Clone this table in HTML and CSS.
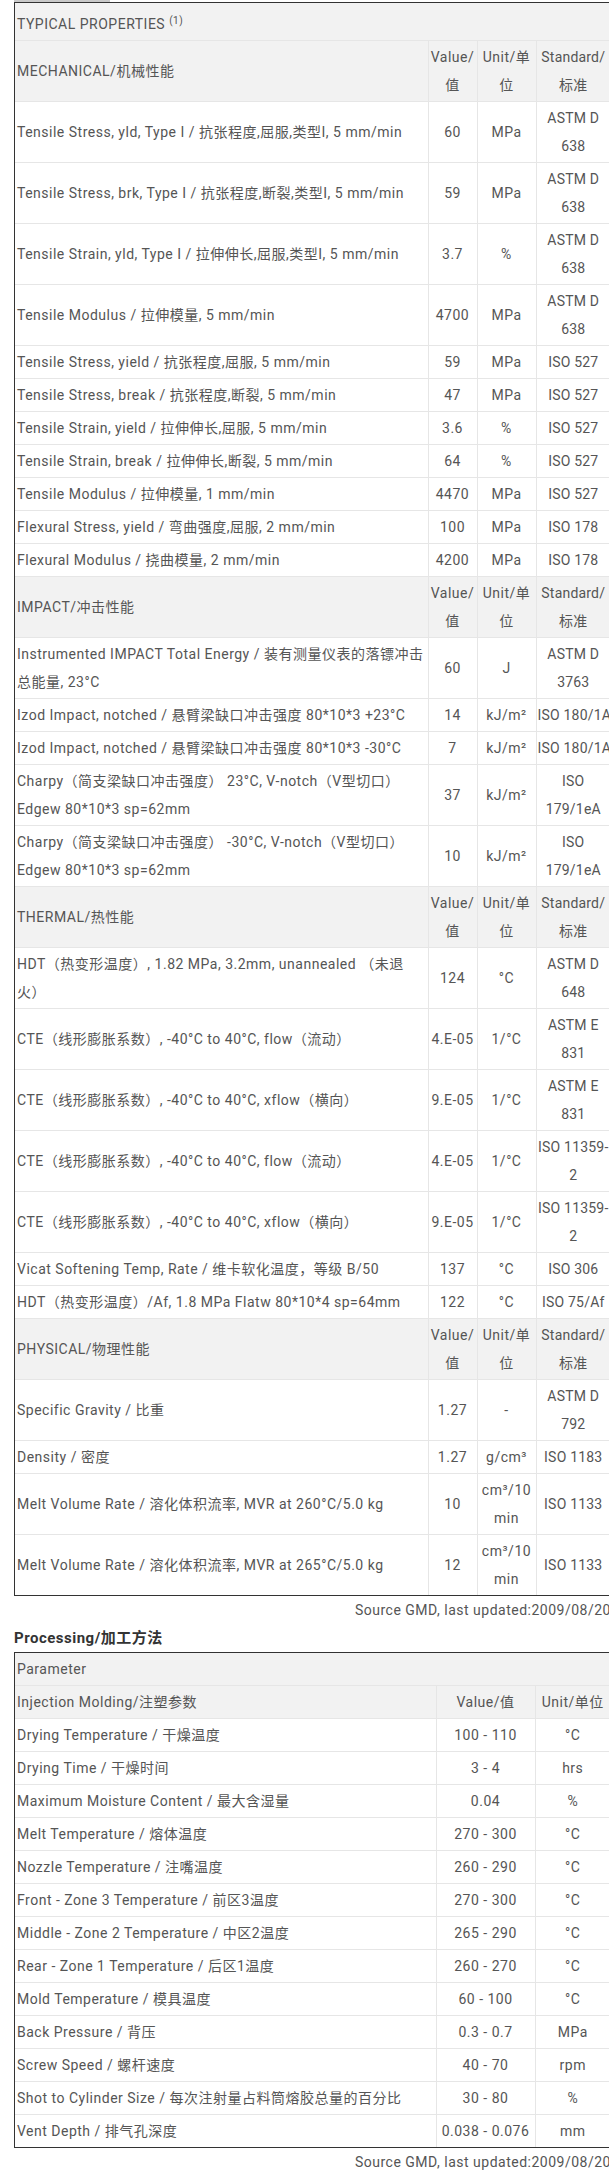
FILE: index.html
```html
<!DOCTYPE html>
<html lang="zh-CN">
<head>
<meta charset="utf-8">
<title>Typical Properties</title>
<link rel="stylesheet" href="styles.css">
</head>
<body>
<div class="page">
  <div class="tab-edge"></div>
  <div class="frame">
    <table class="grid props">
      <colgroup><col class="p-name"><col class="p-val"><col class="p-unit"><col class="p-std"></colgroup>
      <tr class="title"><td colspan="4">TYPICAL PROPERTIES <sup>(1)</sup></td></tr>
      <tr class="sec"><td>MECHANICAL/机械性能</td><td class="c">Value/值</td><td class="c">Unit/单位</td><td class="c std">Standard/标准</td></tr>
      <tr><td>Tensile Stress, yld, Type I / 抗张程度,屈服,类型I, 5 mm/min</td><td class="c">60</td><td class="c">MPa</td><td class="c std">ASTM D 638</td></tr>
      <tr><td>Tensile Stress, brk, Type I / 抗张程度,断裂,类型I, 5 mm/min</td><td class="c">59</td><td class="c">MPa</td><td class="c std">ASTM D 638</td></tr>
      <tr><td>Tensile Strain, yld, Type I / 拉伸伸长,屈服,类型I, 5 mm/min</td><td class="c">3.7</td><td class="c">%</td><td class="c std">ASTM D 638</td></tr>
      <tr><td>Tensile Modulus / 拉伸模量, 5 mm/min</td><td class="c">4700</td><td class="c">MPa</td><td class="c std">ASTM D 638</td></tr>
      <tr><td>Tensile Stress, yield / 抗张程度,屈服, 5 mm/min</td><td class="c">59</td><td class="c">MPa</td><td class="c std">ISO 527</td></tr>
      <tr><td>Tensile Stress, break / 抗张程度,断裂, 5 mm/min</td><td class="c">47</td><td class="c">MPa</td><td class="c std">ISO 527</td></tr>
      <tr><td>Tensile Strain, yield / 拉伸伸长,屈服, 5 mm/min</td><td class="c">3.6</td><td class="c">%</td><td class="c std">ISO 527</td></tr>
      <tr><td>Tensile Strain, break / 拉伸伸长,断裂, 5 mm/min</td><td class="c">64</td><td class="c">%</td><td class="c std">ISO 527</td></tr>
      <tr><td>Tensile Modulus / 拉伸模量, 1 mm/min</td><td class="c">4470</td><td class="c">MPa</td><td class="c std">ISO 527</td></tr>
      <tr><td>Flexural Stress, yield / 弯曲强度,屈服, 2 mm/min</td><td class="c">100</td><td class="c">MPa</td><td class="c std">ISO 178</td></tr>
      <tr><td>Flexural Modulus / 挠曲模量, 2 mm/min</td><td class="c">4200</td><td class="c">MPa</td><td class="c std">ISO 178</td></tr>
      <tr class="sec"><td>IMPACT/冲击性能</td><td class="c">Value/值</td><td class="c">Unit/单位</td><td class="c std">Standard/标准</td></tr>
      <tr><td>Instrumented IMPACT Total Energy / 装有测量仪表的落镖冲击总能量, 23°C</td><td class="c">60</td><td class="c">J</td><td class="c std">ASTM D 3763</td></tr>
      <tr><td>Izod Impact, notched / 悬臂梁缺口冲击强度 80*10*3 +23°C</td><td class="c">14</td><td class="c">kJ/m²</td><td class="c std nw">ISO 180/1A</td></tr>
      <tr><td>Izod Impact, notched / 悬臂梁缺口冲击强度 80*10*3 -30°C</td><td class="c">7</td><td class="c">kJ/m²</td><td class="c std nw">ISO 180/1A</td></tr>
      <tr><td>Charpy（简支梁缺口冲击强度） 23°C, V-notch（V型切口） Edgew 80*10*3 sp=62mm</td><td class="c">37</td><td class="c">kJ/m²</td><td class="c std">ISO 179/1eA</td></tr>
      <tr><td>Charpy（简支梁缺口冲击强度） -30°C, V-notch（V型切口） Edgew 80*10*3 sp=62mm</td><td class="c">10</td><td class="c">kJ/m²</td><td class="c std">ISO 179/1eA</td></tr>
      <tr class="sec"><td>THERMAL/热性能</td><td class="c">Value/值</td><td class="c">Unit/单位</td><td class="c std">Standard/标准</td></tr>
      <tr><td>HDT（热变形温度）, 1.82 MPa, 3.2mm, unannealed （未退火）</td><td class="c">124</td><td class="c">°C</td><td class="c std">ASTM D 648</td></tr>
      <tr><td>CTE（线形膨胀系数）, -40°C to 40°C, flow（流动）</td><td class="c">4.E-05</td><td class="c">1/°C</td><td class="c std">ASTM E 831</td></tr>
      <tr><td>CTE（线形膨胀系数）, -40°C to 40°C, xflow（横向）</td><td class="c">9.E-05</td><td class="c">1/°C</td><td class="c std">ASTM E 831</td></tr>
      <tr><td>CTE（线形膨胀系数）, -40°C to 40°C, flow（流动）</td><td class="c">4.E-05</td><td class="c">1/°C</td><td class="c std">ISO 11359-2</td></tr>
      <tr><td>CTE（线形膨胀系数）, -40°C to 40°C, xflow（横向）</td><td class="c">9.E-05</td><td class="c">1/°C</td><td class="c std">ISO 11359-2</td></tr>
      <tr><td>Vicat Softening Temp, Rate / 维卡软化温度，等级 B/50</td><td class="c">137</td><td class="c">°C</td><td class="c std">ISO 306</td></tr>
      <tr><td>HDT（热变形温度）/Af, 1.8 MPa Flatw 80*10*4 sp=64mm</td><td class="c">122</td><td class="c">°C</td><td class="c std">ISO 75/Af</td></tr>
      <tr class="sec"><td>PHYSICAL/物理性能</td><td class="c">Value/值</td><td class="c">Unit/单位</td><td class="c std">Standard/标准</td></tr>
      <tr><td>Specific Gravity / 比重</td><td class="c">1.27</td><td class="c">-</td><td class="c std">ASTM D 792</td></tr>
      <tr><td>Density / 密度</td><td class="c">1.27</td><td class="c">g/cm³</td><td class="c std">ISO 1183</td></tr>
      <tr><td>Melt Volume Rate / 溶化体积流率, MVR at 260°C/5.0 kg</td><td class="c">10</td><td class="c">cm³/10 min</td><td class="c std">ISO 1133</td></tr>
      <tr><td>Melt Volume Rate / 溶化体积流率, MVR at 265°C/5.0 kg</td><td class="c">12</td><td class="c">cm³/10 min</td><td class="c std">ISO 1133</td></tr>
    </table>
  </div>
  <p class="source">Source GMD, last updated:2009/08/20</p>

  <h2 class="heading">Processing/加工方法</h2>
  <div class="frame">
    <table class="grid proc">
      <colgroup><col class="q-name"><col class="q-val"><col class="q-unit"></colgroup>
      <tr class="sec"><td colspan="3">Parameter</td></tr>
      <tr class="sec"><td>Injection Molding/注塑参数</td><td class="c">Value/值</td><td class="c">Unit/单位</td></tr>
      <tr><td>Drying Temperature / 干燥温度</td><td class="c">100 - 110</td><td class="c">°C</td></tr>
      <tr><td>Drying Time / 干燥时间</td><td class="c">3 - 4</td><td class="c">hrs</td></tr>
      <tr><td>Maximum Moisture Content / 最大含湿量</td><td class="c">0.04</td><td class="c">%</td></tr>
      <tr><td>Melt Temperature / 熔体温度</td><td class="c">270 - 300</td><td class="c">°C</td></tr>
      <tr><td>Nozzle Temperature / 注嘴温度</td><td class="c">260 - 290</td><td class="c">°C</td></tr>
      <tr><td>Front - Zone 3 Temperature / 前区3温度</td><td class="c">270 - 300</td><td class="c">°C</td></tr>
      <tr><td>Middle - Zone 2 Temperature / 中区2温度</td><td class="c">265 - 290</td><td class="c">°C</td></tr>
      <tr><td>Rear - Zone 1 Temperature / 后区1温度</td><td class="c">260 - 270</td><td class="c">°C</td></tr>
      <tr><td>Mold Temperature / 模具温度</td><td class="c">60 - 100</td><td class="c">°C</td></tr>
      <tr><td>Back Pressure / 背压</td><td class="c">0.3 - 0.7</td><td class="c">MPa</td></tr>
      <tr><td>Screw Speed / 螺杆速度</td><td class="c">40 - 70</td><td class="c">rpm</td></tr>
      <tr><td>Shot to Cylinder Size / 每次注射量占料筒熔胶总量的百分比</td><td class="c">30 - 80</td><td class="c">%</td></tr>
      <tr><td>Vent Depth / 排气孔深度</td><td class="c">0.038 - 0.076</td><td class="c">mm</td></tr>
    </table>
  </div>
  <p class="source">Source GMD, last updated:2009/08/20</p>
</div>
</body>
</html>
```

FILE: styles.css
```css
html, body {
  margin: 0;
  padding: 0;
  overflow-x: hidden;
  background: #fff;
}

body {
  font-family: Roboto, "Noto Sans CJK SC", sans-serif;
  font-size: 14px;
  letter-spacing: 0.5px;
  color: #555;
}

.page {
  width: 597px;
  padding-left: 14px;
}

.tab-edge {
  width: 96px;
  height: 2px;
  background: #c9c9c9;
}

.frame {
  border: 1px solid #333;
}

.grid {
  width: 100%;
  border-collapse: collapse;
  table-layout: fixed;
}

.grid td {
  border: 1px solid #e6e6e6;
  padding: 2px 2px;
  line-height: 28px;
  vertical-align: middle;
  text-align: left;
}

.grid tr:first-child td { border-top: 0; }
.grid tr:last-child td { border-bottom: 0; }
.grid td:first-child { border-left: 0; }
.grid td:last-child { border-right: 0; }

.grid td.c { text-align: center; }
.grid td.std { letter-spacing: 0.2px; padding-left: 1px; padding-right: 1px; }
.grid td.nw { white-space: nowrap; }

.sec td, .title td {
  background: #f2f2f2;
}

.title td {
  padding-top: 7px;
  padding-bottom: 2px;
}

.title sup {
  font-size: 10px;
  line-height: 0;
  vertical-align: 5px;
}

.p-name { width: 413px; }
.p-val { width: 49px; }
.p-unit { width: 59px; }
.p-std { width: 74px; }

.q-name { width: 421px; }
.q-val { width: 99px; }
.q-unit { width: 75px; }

.source {
  margin: 0;
  text-align: right;
  line-height: 28px;
  white-space: nowrap;
}

.heading {
  margin: 0;
  font-size: 15px;
  font-weight: bold;
  line-height: 28px;
  color: #333;
}
```
